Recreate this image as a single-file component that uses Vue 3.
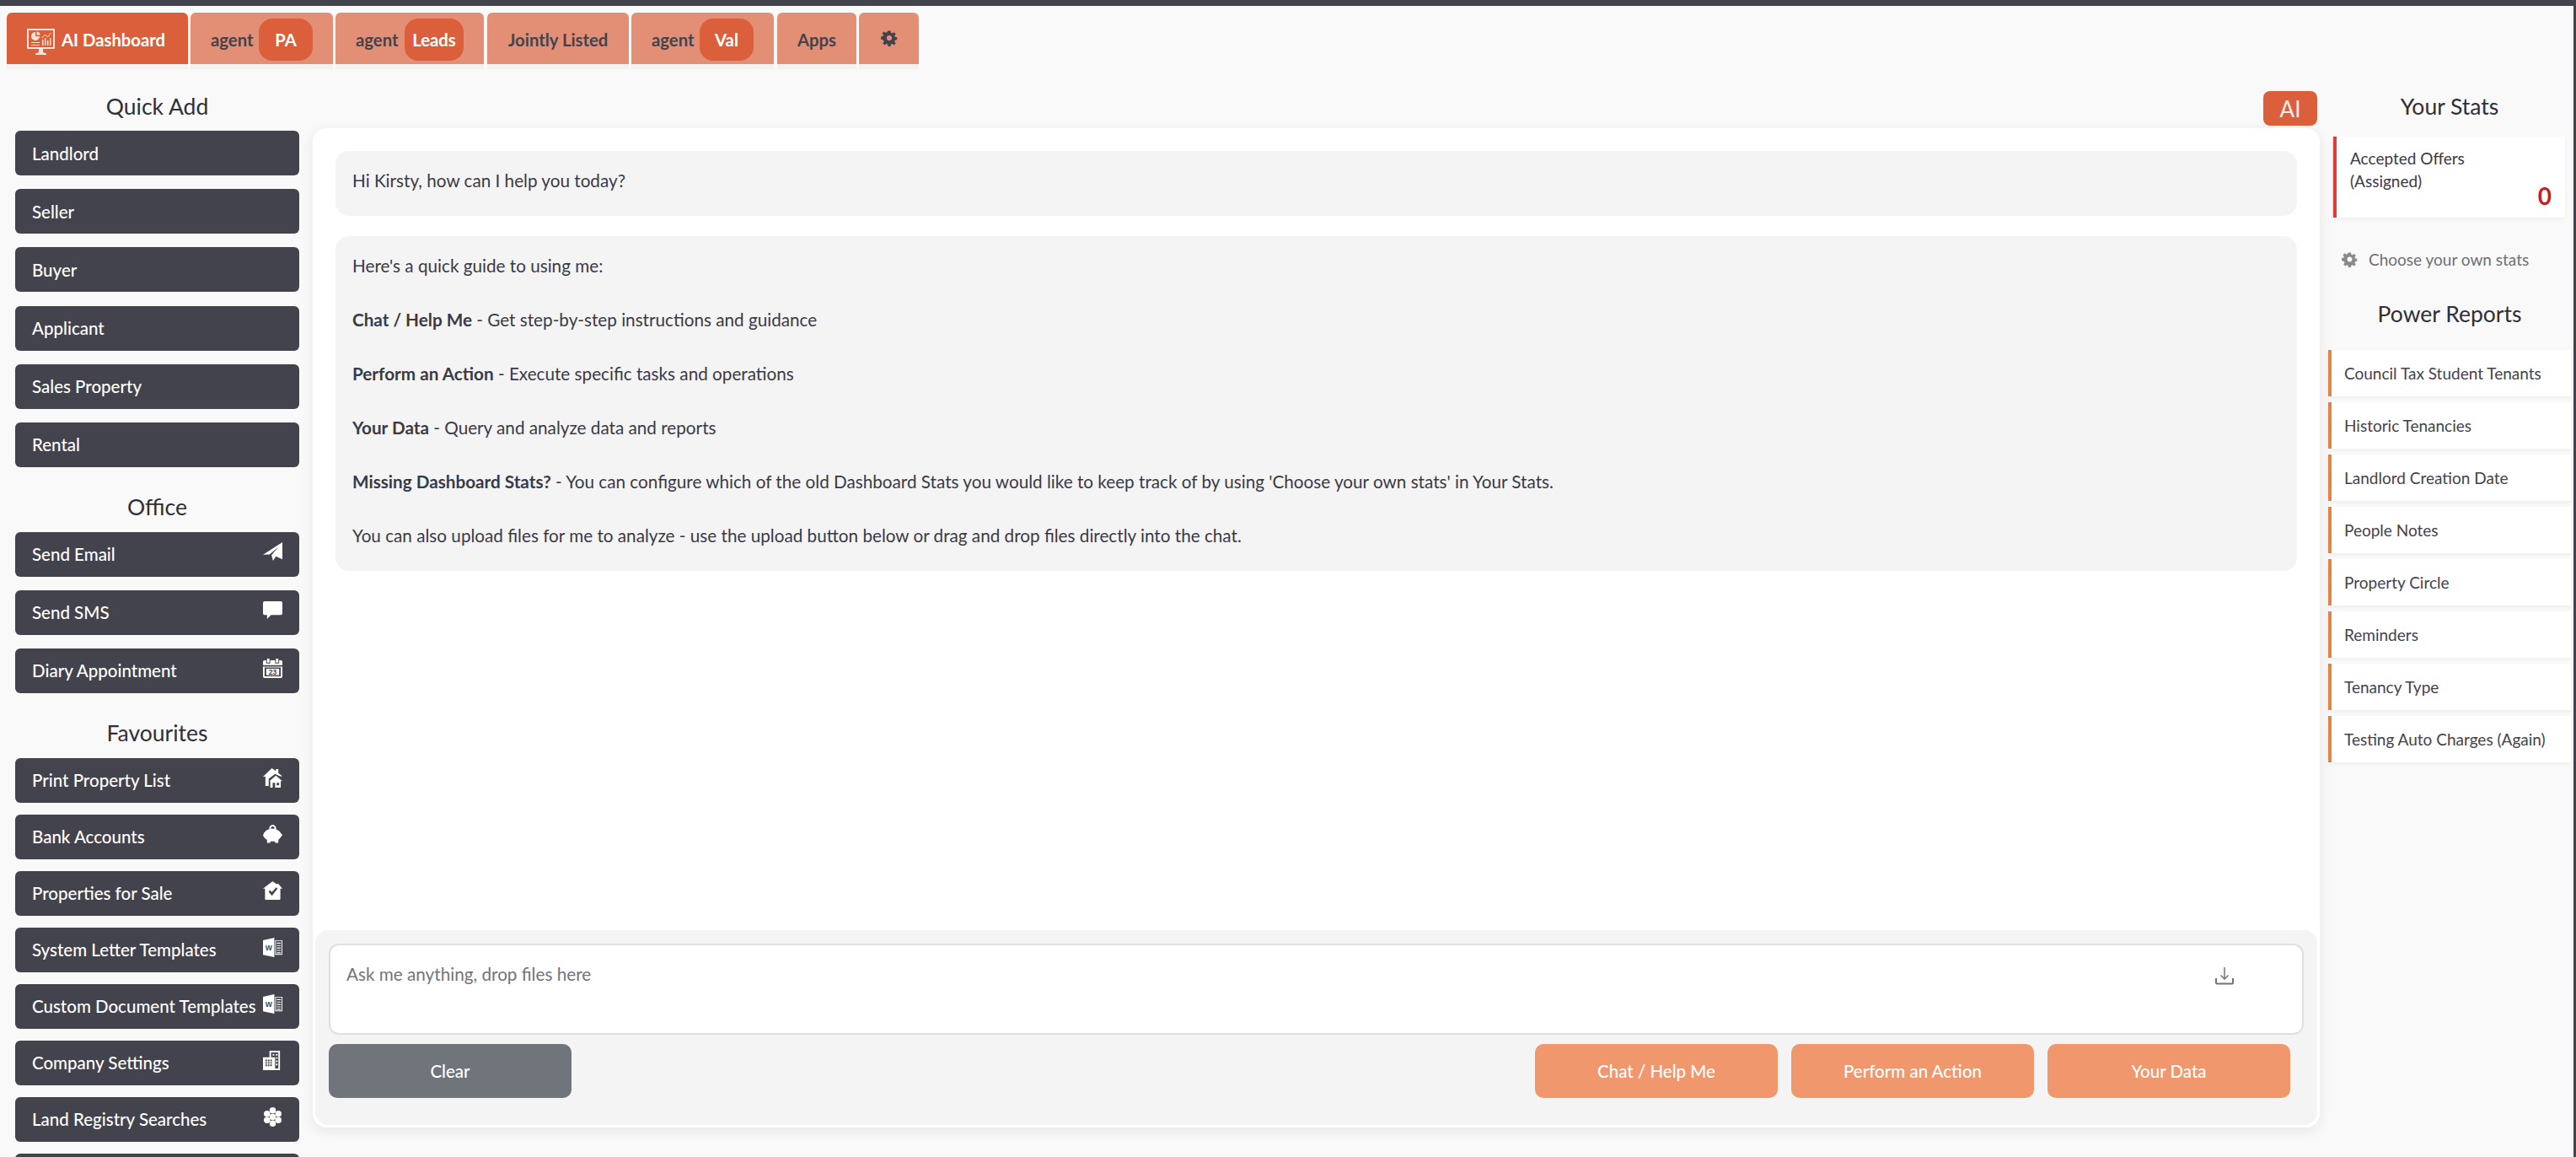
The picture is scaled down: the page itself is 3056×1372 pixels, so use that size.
<template>
  <div class="page">
    <!-- tabs -->
    <div class="tabs">
      <div v-for="tab in tabs" :key="tab.label + tab.pill" class="tab" :class="[tab.cls, { active: tab.active, split: tab.pill }]">
        <svg v-if="tab.active" class="logo" viewBox="0 0 33 31" fill="#fbe4da">
          <path fill-rule="evenodd" d="M1 0h31a1 1 0 0 1 1 1v22a1 1 0 0 1-1 1H1a1 1 0 0 1-1-1V1a1 1 0 0 1 1-1zm1 2v20h29V2z" />
          <path d="M10 4a5 5 0 1 0 5 5h-5z" />
          <path d="M11.500 3.500a4 4 0 0 1 4 4h-4z" />
          <path d="M5 16h10v1H5zM5 19h10v1H5z" />
          <path d="M18 13h1.500v7H18zM21 11h1.500v9H21zM24 14h1.500v6H24zM27 11h1.500v9H27z" />
          <path d="M17.500 11l4-4 3 3 4-5" stroke="#fbe4da" stroke-width="1" fill="none" />
          <path d="M14 24h5v4h-5zM10 31v-1.500l4-1.500h5l4 1.500V31z" />
        </svg>
        <span v-if="tab.label">{{ tab.label }}</span>
        <span v-if="tab.pill" class="pill">{{ tab.pill }}</span>
        <svg v-if="tab.gear" class="tab-gear" viewBox="-1 0 26 24"><path :d="gearPath" /></svg>
      </div>
    </div>

    <div class="content">
      <!-- left column -->
      <aside class="left">
        <template v-for="group in groups" :key="group.title">
          <h2 class="side-title" :class="group.cls">{{ group.title }}</h2>
          <div class="btn-list" :class="group.cls">
            <div v-for="item in group.items" :key="item.label" class="side-btn">
              <span>{{ item.label }}</span>
              <svg v-if="item.icon" class="side-icon" viewBox="0 0 24 24" fill="#fff" v-html="icons[item.icon]"></svg>
            </div>
          </div>
        </template>
        <div class="side-btn cut"></div>
      </aside>

      <!-- chat -->
      <main class="centre">
        <div class="ai-row"><span class="ai-btn">AI</span></div>
        <div class="panel">
          <div class="messages">
            <div class="msg">Hi Kirsty, how can I help you today?</div>
            <div class="msg">
              <p>Here's a quick guide to using me:</p>
              <p><b>Chat / Help Me</b> - Get step-by-step instructions and guidance</p>
              <p><b>Perform an Action</b> - Execute specific tasks and operations</p>
              <p><b>Your Data</b> - Query and analyze data and reports</p>
              <p><b>Missing Dashboard Stats?</b> - You can configure which of the old Dashboard Stats you would like to keep track of by using 'Choose your own stats' in Your Stats.</p>
              <p>You can also upload files for me to analyze - use the upload button below or drag and drop files directly into the chat.</p>
            </div>
          </div>
          <div class="composer">
            <div class="input">
              <span class="placeholder">Ask me anything, drop files here</span>
              <svg class="upload" viewBox="0 0 22 22" fill="none" stroke="#6c757d">
                <path d="M11 1v14M6.500 10.500L11 15l4.500-4.500" stroke-width="1.500" />
                <path d="M1 14v5.500a1 1 0 0 0 1 1h18a1 1 0 0 0 1-1V14" stroke-width="2" />
              </svg>
            </div>
            <div class="actions">
              <div class="clear">Clear</div>
              <div class="action-group">
                <div v-for="a in actions" :key="a" class="action">{{ a }}</div>
              </div>
            </div>
          </div>
        </div>
      </main>

      <!-- right column -->
      <aside class="right">
        <h2 class="right-title">Your Stats</h2>
        <div class="stat">
          <div class="stat-label">Accepted Offers<br />(Assigned)</div>
          <div class="stat-value">0</div>
        </div>
        <div class="choose">
          <svg viewBox="-1 0 26 24" fill="#8a8a8a"><path :d="gearPath" /></svg>
          <span>Choose your own stats</span>
        </div>
        <h2 class="right-title power">Power Reports</h2>
        <div class="reports">
          <div v-for="r in reports" :key="r" class="report">{{ r }}</div>
        </div>
      </aside>
      <div class="edge"></div>
    </div>
  </div>
</template>

<script setup>
const gearPath = 'M10 1h4l.6 3.200 1.900.8 2.700-1.900 2.800 2.800-1.900 2.700.8 1.900 3.100.5v4l-3.100.6-.8 1.900 1.900 2.700-2.800 2.800-2.700-1.900-1.900.8-.6 3.100h-4l-.6-3.100-1.900-.8-2.700 1.900-2.800-2.800 1.900-2.700-.8-1.900L-1 14v-4l3.100-.5.8-1.900L1 4.900l2.800-2.800 2.700 1.900 1.900-.8zM12 8a4 4 0 1 0 0 8 4 4 0 0 0 0-8z'

const tabs = [
  { label: 'AI Dashboard', active: true, cls: 't-ai' },
  { label: 'agent', pill: 'PA', cls: 't-pa' },
  { label: 'agent', pill: 'Leads', cls: 't-leads' },
  { label: 'Jointly Listed', cls: 't-joint' },
  { label: 'agent', pill: 'Val', cls: 't-val' },
  { label: 'Apps', cls: 't-apps' },
  { label: '', gear: true, cls: 't-gear' }
]

const groups = [
  {
    title: 'Quick Add',
    cls: 'g-add',
    items: [
      { label: 'Landlord' },
      { label: 'Seller' },
      { label: 'Buyer' },
      { label: 'Applicant' },
      { label: 'Sales Property' },
      { label: 'Rental' }
    ]
  },
  {
    title: 'Office',
    cls: 'g-office',
    items: [
      { label: 'Send Email', icon: 'plane' },
      { label: 'Send SMS', icon: 'chat' },
      { label: 'Diary Appointment', icon: 'calendar' }
    ]
  },
  {
    title: 'Favourites',
    cls: 'g-fav',
    items: [
      { label: 'Print Property List', icon: 'houses' },
      { label: 'Bank Accounts', icon: 'piggy' },
      { label: 'Properties for Sale', icon: 'check' },
      { label: 'System Letter Templates', icon: 'word' },
      { label: 'Custom Document Templates', icon: 'word' },
      { label: 'Company Settings', icon: 'building' },
      { label: 'Land Registry Searches', icon: 'hex' }
    ]
  }
]

const icons = {
  plane: '<path d="M24 0v21l-8-3.500-3.500 5.500-2-7L19 6 8 15 0 15.500z"/>',
  chat: '<path d="M2 1h20a2 2 0 0 1 2 2v13a2 2 0 0 1-2 2H10l-5 5v-5H2a2 2 0 0 1-2-2V3a2 2 0 0 1 2-2z"/>',
  calendar: '<path d="M5 0h3v5H5zM16 0h3v5h-3z"/><path d="M0 4a2 2 0 0 1 2-2h2v4h5V2h6v4h5V2h2a2 2 0 0 1 2 2v4H0z"/><path fill-rule="evenodd" d="M0 10h24v12a2 2 0 0 1-2 2H2a2 2 0 0 1-2-2zM2 11v11h20V11z"/><rect x="4" y="12.500" width="16" height="8" /><text x="12" y="20" font-size="9" font-weight="700" text-anchor="middle" fill="#43434d" font-family="Liberation Sans">23</text>',
  houses: '<path d="M11 0l5 3.500V1h3v5l5 4h-3L15 7 7 13v9H3V10.500H0z"/><path d="M16 9l8 7h-2v8H9v-8H8z"/><path fill="#43434d" d="M12 18h3v6h-3zM17 18h3v3h-3z"/>',
  piggy: '<path fill-rule="evenodd" d="M12 0a4.200 4.200 0 0 1 4 5.500C19 6.500 21 8.500 22 10.500l2 2-2 3c-1 1.500-2 2.500-3 3v4h-4v-2H9v2H5v-4c-2-1-4-3-5-5.500C2 8 5 6 8 5.500A4.200 4.200 0 0 1 12 0zm0 2a2.200 2.200 0 0 0-2 3h4A2.200 2.200 0 0 0 12 2z"/>',
  check: '<path fill-rule="evenodd" d="M12 0l4 3h3l5 6h-2.500v13a1 1 0 0 1-1 1h-17a1 1 0 0 1-1-1V9H0zM7 13l4 5 7-9-1.800-1.500L11 13.500 8.700 11z"/>',
  word: '<path d="M0 3l14-3v24L0 21z"/><path fill-rule="evenodd" d="M15 3h9v18h-9zM16 4v16h7V4z"/><path d="M17 6h5v1.200h-5zM17 9h5v1.200h-5zM17 12h5v1.200h-5zM17 15h5v1.200h-5zM17 18h5v1.200h-5z"/><text x="7" y="15.500" font-size="9" font-weight="700" text-anchor="middle" fill="#43434d" font-family="Liberation Sans">W</text>',
  building: '<path fill-rule="evenodd" d="M8 0h13v24H0V8h8zM10 2v6h5v14h4V2zM12 4h2v2h-2zM16 4h2v2h-2zM16 8h2v2h-2zM16 12h2v2h-2zM16 16h2v2h-2zM3 11h2v2H3zM6 11h2v2H6zM9 11h2v2H9zM3 14h2v2H3zM6 14h2v2H6zM9 14h2v2H9zM3 17h2v2H3zM6 17h2v2H6zM9 17h2v2H9z"/>',
  hex: '<circle cx="12" cy="12" r="3.900"/><circle cx="12" cy="4" r="3.900"/><circle cx="19" cy="8" r="3.900"/><circle cx="19" cy="16" r="3.900"/><circle cx="12" cy="20" r="3.900"/><circle cx="5" cy="16" r="3.900"/><circle cx="5" cy="8" r="3.900"/>'
}

const actions = ['Chat / Help Me', 'Perform an Action', 'Your Data']

const reports = [
  'Council Tax Student Tenants',
  'Historic Tenancies',
  'Landlord Creation Date',
  'People Notes',
  'Property Circle',
  'Reminders',
  'Tenancy Type',
  'Testing Auto Charges (Again)'
]
</script>

<style>
html, body {
  margin: 0;
  background: #f9f9f9;
  overflow: hidden;
}
</style>

<style scoped>
.page {
  height: 1372px;
  box-sizing: border-box;
  overflow: hidden;
  border-top: 7px solid #43434d;
  background: #f9f9f9;
  color: #3a3a47;
  font-family: Lato, "Open Sans", sans-serif;
  font-size: 20.7px;
}

/* tabs */
.tabs {
  display: flex;
  height: 67px;
  padding: 8px 0 0 8px;
  gap: 3px;
}
.tab {
  display: flex;
  align-items: center;
  justify-content: center;
  box-sizing: border-box;
  height: 67px;
  padding-top: 3px;
  background: #e38f75;
  border-bottom: 6px solid #f4f2f1;
  border-radius: 6px 6px 0 0;
  font-weight: 700;
  font-size: 20.3px;
  color: #43434d;
}
.tab.split {
  justify-content: space-between;
  padding-left: 24px;
  padding-right: 24px;
}
.tab.active {
  justify-content: flex-start;
  padding-left: 24px;
  background: #dc5f3b;
  color: #fff;
  gap: 8px;
}
.t-ai { width: 215px; }
.t-pa { width: 169px; }
.t-leads { width: 176px; margin-right: 1px; }
.t-joint { width: 168px; }
.t-val { width: 169px; margin-right: 1px; }
.t-apps { width: 94px; }
.t-gear { width: 71px; align-items: flex-start; padding-top: 20px; }
.logo {
  flex: none;
  width: 33px;
  height: 31px;
  margin-top: 4px;
}
.pill {
  display: flex;
  align-items: center;
  justify-content: center;
  height: 50px;
  background: #dc5f3b;
  border-radius: 16px;
  color: #fff;
}
.t-pa .pill, .t-val .pill { width: 64px; }
.t-leads .pill { width: 70px; }
.tab-gear {
  width: 20px;
  height: 20px;
  fill: #43434d;
}

/* page columns */
.content {
  display: flex;
  align-items: flex-start;
  margin-top: 17px;
}

/* left */
.left {
  flex: none;
  box-sizing: border-box;
  width: 371px;
  padding: 0 16px 0 18px;
}
h2 {
  margin: 0;
  font-weight: 400;
  font-size: 26.5px;
  line-height: 34px;
  color: #2f2f3a;
  text-align: center;
}
.side-title {
  margin-top: 30px;
  margin-bottom: 13px;
}
.g-add.side-title {
  margin-top: 10px;
  margin-bottom: 12px;
}
.btn-list {
  display: flex;
  flex-direction: column;
  gap: 16.2px;
}
.btn-list.g-office {
  gap: 16px;
}
.btn-list.g-fav {
  gap: 14px;
}
.side-btn {
  display: flex;
  align-items: center;
  justify-content: space-between;
  box-sizing: border-box;
  height: 53px;
  padding: 0 20px;
  background: #43434d;
  border-radius: 6px;
  color: #fff;
  font-size: 20.5px;
  font-weight: 500;
  white-space: nowrap;
}
.side-icon {
  flex: none;
  width: 23px;
  height: 23px;
  margin-top: -6px;
}
.cut {
  margin-top: 14px;
}

/* centre */
.centre {
  flex: none;
  width: 2381px;
}
.ai-row {
  display: flex;
  justify-content: flex-end;
  height: 44px;
  margin-top: 9px;
  padding-right: 3px;
}
.ai-btn {
  display: flex;
  align-items: center;
  justify-content: center;
  width: 64px;
  height: 41px;
  background: #dc5f3b;
  border-radius: 8px;
  color: #f8ece8;
  font-size: 26px;
}
.panel {
  box-sizing: border-box;
  display: flex;
  flex-direction: column;
  justify-content: space-between;
  height: 1185px;
  padding: 0 3px 3px;
  background: #fff;
  border-radius: 16px;
  box-shadow: 0 4px 16px rgba(0, 0, 0, 0.08);
}
.messages {
  display: flex;
  flex-direction: column;
  gap: 24px;
  padding: 27px 24px 0;
}
.msg {
  padding: 19px 20px 26px;
  background: #f4f4f4;
  border-radius: 16px;
  line-height: 32px;
}
.msg p {
  margin: 0 0 32px;
}
.msg p:last-child {
  margin-bottom: 0;
}
.composer {
  box-sizing: border-box;
  height: 231px;
  padding: 16px 16px 0;
  background: #f4f4f4;
  border-radius: 16px;
}
.input {
  position: relative;
  box-sizing: border-box;
  height: 108px;
  padding: 19px 19px;
  background: #fff;
  border: 2px solid #e0e0e2;
  border-radius: 12px;
  line-height: 30px;
}
.placeholder {
  color: #73737d;
}
.upload {
  position: absolute;
  top: 25px;
  right: 81px;
  width: 22px;
  height: 22px;
}
.actions {
  display: flex;
  justify-content: space-between;
  margin-top: 11px;
  padding-right: 16px;
}
.clear, .action {
  display: flex;
  align-items: center;
  justify-content: center;
  width: 288px;
  height: 64px;
  border-radius: 10px;
  color: #fff;
  font-size: 20.5px;
  font-weight: 500;
}
.clear {
  background: #70757c;
}
.action-group {
  display: flex;
  gap: 16px;
}
.action {
  background: #f0976d;
}

/* right */
.right {
  flex: none;
  box-sizing: border-box;
  width: 301px;
  padding-left: 10px;
  font-size: 19px;
}
.right-title {
  margin: 10px 0 19px 0;
  width: 288px;
}
.right-title.power {
  margin: 0 0 26px;
}
.stat {
  box-sizing: border-box;
  width: 275px;
  height: 96px;
  margin-left: 6px;
  padding: 12px 16px 0 16px;
  background: #fff;
  border-left: 4px solid #e53935;
  box-shadow: 0 2px 4px rgba(0, 0, 0, 0.05);
  line-height: 27px;
}
.stat-value {
  margin-top: -12px;
  text-align: right;
  color: #c32121;
  font-size: 28px;
  font-weight: 700;
  line-height: 32px;
}
.choose {
  display: flex;
  align-items: center;
  gap: 13px;
  height: 60px;
  margin: 19px 0 18px 16px;
  color: #6f6f78;
}
.choose svg {
  width: 19px;
  height: 19px;
}
.reports {
  display: flex;
  flex-direction: column;
  gap: 7px;
}
.report {
  display: flex;
  align-items: center;
  box-sizing: border-box;
  width: 288px;
  height: 55px;
  padding: 0 0 1px 15px;
  background: #fff;
  border-left: 4px solid #e8833f;
  box-shadow: 0 2px 4px rgba(0, 0, 0, 0.05);
  color: #43434d;
}
.edge {
  position: absolute;
  top: 0;
  right: 0;
  width: 3px;
  height: 1372px;
  background: #43434d;
}
</style>
